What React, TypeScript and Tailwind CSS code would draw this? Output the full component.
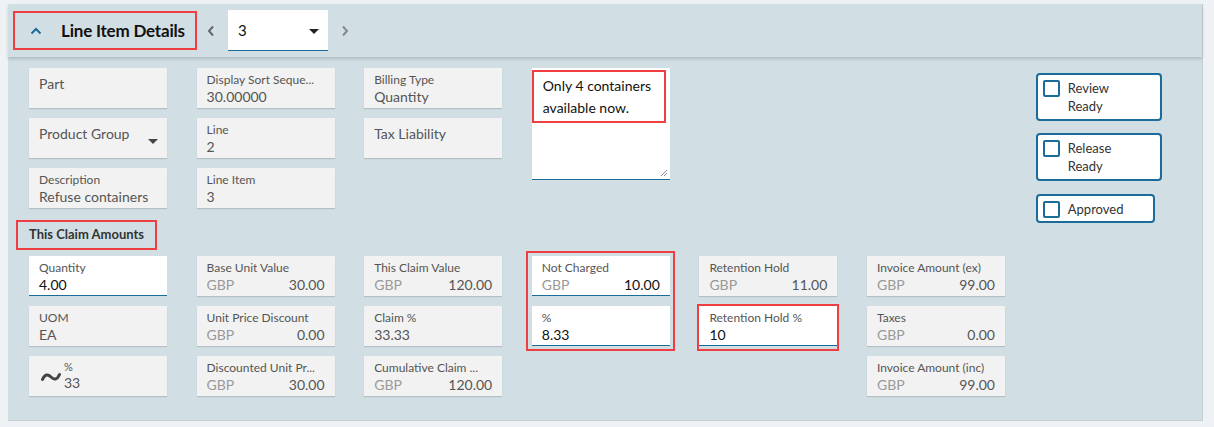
import React from "react";

const FONT = { fontFamily: "Lato, 'Noto Sans', sans-serif" };

type FieldProps = {
  label?: string;
  value?: string;
  currency?: boolean;
  editable?: boolean;
  dropdown?: boolean;
};

function Field({ label, value, currency, editable, dropdown }: FieldProps) {
  const base = editable
    ? "bg-white border-b border-[#1b6b9b]"
    : "bg-[#f2f2f2] shadow-[0_1px_1px_rgba(0,0,0,0.14)]";
  if (!value && !currency) {
    return (
      <div className={`${base} relative h-[40px] w-[138px] px-[10px] pt-[6px] text-[14px] leading-[20px] text-[#555]`}>
        {label}
        {dropdown && (
          <span className="absolute right-[9px] top-[21px] h-0 w-0 border-x-[5px] border-t-[5px] border-x-transparent border-t-[#444]" />
        )}
      </div>
    );
  }
  return (
    <div className={`${base} h-[40px] w-[138px] px-[10px] pt-[5px]`}>
      <div className="truncate text-[12px] leading-[14px] text-[#555]">{label}</div>
      {currency ? (
        <div className="flex justify-between text-[14px] leading-[20px]">
          <span className="text-[#999]">GBP</span>
          <span className={editable ? "text-[#111]" : "text-[#555]"}>{value}</span>
        </div>
      ) : (
        <div className={`text-[14px] leading-[20px] ${editable ? "text-[#111]" : "text-[#555]"}`}>{value}</div>
      )}
    </div>
  );
}

function Check({ label, wide = true }: { label: React.ReactNode; wide?: boolean }) {
  return (
    <div
      className={`flex items-start gap-[8px] rounded-[4px] border-2 border-[#1b6b9b] bg-white pl-[5px] ${
        wide ? "w-[126px] py-[4px]" : "w-[119px] py-[3.5px]"
      }`}
    >
      <span className="mt-[1px] h-[17px] w-[17px] shrink-0 rounded-[2px] border-2 border-[#1b6b9b]" />
      <span className="text-[13px] leading-[18px] text-[#333]">{label}</span>
    </div>
  );
}

export default function App() {
  return (
    <div className="h-[427px] w-[1214px] bg-[#eef2f4] pt-[4px]" style={FONT}>
      <div className="ml-[8px] h-[417px] w-[1195px] border-r border-b border-[#c4cfd4] bg-[#d1dfe4]">
        {/* header */}
        <div className="flex h-[53px] items-center pl-[5px] shadow-[0_2px_3px_rgba(0,0,0,0.16)]">
          <div className="flex h-[39px] w-[184px] items-center border-2 border-[#ee3e42]">
            <svg width="12" height="8" viewBox="0 0 12 8" className="ml-[15px] shrink-0">
              <path d="M1.5 6.5 L6 2 L10.5 6.5" fill="none" stroke="#1b6b9b" strokeWidth="2" />
            </svg>
            <span className="ml-[19px] whitespace-nowrap text-[17px] font-bold tracking-[-0.2px] text-[#111]">
              Line Item Details
            </span>
          </div>
          <svg width="8" height="12" viewBox="0 0 8 12" className="ml-[10px]">
            <path d="M6 1.5 L2 6 L6 10.5" fill="none" stroke="#666" strokeWidth="2" />
          </svg>
          <div className="relative ml-[13px] flex h-[41px] w-[100px] items-center border-b border-[#1b6b9b] bg-white pl-[10px] text-[15px] text-[#111]">
            3
            <span className="absolute right-[9px] top-[19px] h-0 w-0 border-x-[5px] border-t-[5px] border-x-transparent border-t-[#222]" />
          </div>
          <svg width="8" height="12" viewBox="0 0 8 12" className="ml-[13px]">
            <path d="M2 1.5 L6 6 L2 10.5" fill="none" stroke="#888" strokeWidth="2" />
          </svg>
        </div>

        {/* body */}
        <div className="pl-[21px] pt-[11px]">
          <div className="flex h-[140px] items-start">
            <div className="grid grid-cols-[repeat(4,138px)] gap-x-[29.6px] gap-y-[10px]">
              <Field label="Part" />
              <Field label="Display Sort Seque..." value="30.00000" />
              <Field label="Billing Type" value="Quantity" />
              <div className="relative row-span-3 h-[112px] w-[138px] self-start border-b border-[#1b6b9b] bg-white">
                <div className="absolute left-0 top-[2px] h-[53px] w-[134px] border-2 border-[#ee3e42] px-[9px] pt-[3px] text-[14px] leading-[22px] text-[#111]">
                  Only 4 containers available now.
                </div>
                <svg width="8" height="8" viewBox="0 0 8 8" className="absolute bottom-[2px] right-[2px]">
                  <path d="M7 1 L1 7 M7 4 L4 7" stroke="#888" strokeWidth="1" />
                </svg>
              </div>
              <Field label="Product Group" dropdown />
              <Field label="Line" value="2" />
              <Field label="Tax Liability" />
              <Field label="Description" value="Refuse containers" />
              <Field label="Line Item" value="3" />
            </div>
            <div className="ml-[366px] flex flex-col pt-[5px]">
              <Check label={<>Review<br />Ready</>} />
              <div className="h-[12px]" />
              <Check label={<>Release<br />Ready</>} />
              <div className="h-[13px]" />
              <Check label="Approved" wide={false} />
            </div>
          </div>

          <div className="mb-[6px] -ml-[13px] mt-[12px] flex h-[30px] w-[141px] items-center border-2 border-[#ee3e42] pl-[11px] text-[13px] font-bold text-[#333]">
            This Claim Amounts
          </div>

          <div className="grid grid-cols-[repeat(6,138px)] gap-x-[29.6px] gap-y-[10px]">
            <div className="flex flex-col gap-[10px]">
              <Field label="Quantity" value="4.00" editable />
              <Field label="UOM" value="EA" />
              <div className="flex h-[40px] w-[138px] items-center bg-[#f2f2f2] pl-[12px] shadow-[0_1px_1px_rgba(0,0,0,0.14)]">
                <svg width="20" height="10" viewBox="0 0 20 10" className="mt-[2px] shrink-0">
                  <path d="M1.5 7.5 C4 2, 7 2, 10 5 S16 8, 18.5 2.5" fill="none" stroke="#444" strokeWidth="3" strokeLinecap="round" />
                </svg>
                <div className="ml-[3px] flex flex-col">
                  <span className="text-[11px] leading-[14px] text-[#555]">%</span>
                  <span className="text-[14px] leading-[18px] text-[#555]">33</span>
                </div>
              </div>
            </div>
            <div className="flex flex-col gap-[10px]">
              <Field label="Base Unit Value" value="30.00" currency />
              <Field label="Unit Price Discount" value="0.00" currency />
              <Field label="Discounted Unit Pr..." value="30.00" currency />
            </div>
            <div className="flex flex-col gap-[10px]">
              <Field label="This Claim Value" value="120.00" currency />
              <Field label="Claim %" value="33.33" />
              <Field label="Cumulative Claim ..." value="120.00" currency />
            </div>
            <div className="relative flex flex-col gap-[10px] self-start">
              <Field label="Not Charged" value="10.00" currency editable />
              <Field label="%" value="8.33" editable />
              <div className="pointer-events-none absolute -bottom-[5px] -left-[6px] -right-[5px] -top-[5px] border-2 border-[#ee3e42]" />
            </div>
            <div className="flex flex-col gap-[10px]">
              <Field label="Retention Hold" value="11.00" currency />
              <div className="relative">
                <Field label="Retention Hold %" value="10" editable />
                <div className="pointer-events-none absolute -bottom-[5px] -left-[2px] -right-[2px] -top-[2px] border-2 border-[#ee3e42]" />
              </div>
            </div>
            <div className="flex flex-col gap-[10px]">
              <Field label="Invoice Amount (ex)" value="99.00" currency />
              <Field label="Taxes" value="0.00" currency />
              <Field label="Invoice Amount (inc)" value="99.00" currency />
            </div>
          </div>
        </div>
      </div>
    </div>
  );
}
